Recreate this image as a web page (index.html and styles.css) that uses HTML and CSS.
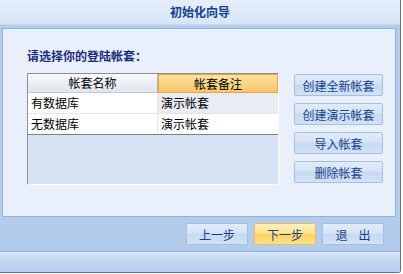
FILE: index.html
```html
<!DOCTYPE html>
<html lang="zh">
<head>
    <meta charset="UTF-8">
    <title>初始化向导</title>
    <link rel="stylesheet" href="styles.css">
</head>
<body>

<div class="window">
    <div class="titlebar">初始化向导</div>

    <div class="panel">
        <p class="label">请选择你的登陆帐套：</p>

        <div class="content">
            <div class="grid">
                <div class="row head">
                    <div class="cell first">帐套名称</div>
                    <div class="cell second sorted">帐套备注</div>
                </div>
                <div class="row">
                    <div class="cell first">有数据库</div>
                    <div class="cell second shaded">演示帐套</div>
                </div>
                <div class="row last">
                    <div class="cell first">无数据库</div>
                    <div class="cell second">演示帐套</div>
                </div>
            </div>

            <div class="side">
                <button class="btn wide">创建全新帐套</button>
                <button class="btn wide">创建演示帐套</button>
                <button class="btn wide">导入帐套</button>
                <button class="btn wide">删除帐套</button>
            </div>
        </div>
    </div>

    <div class="footer">
        <button class="btn">上一步</button>
        <button class="btn active">下一步</button>
        <button class="btn">退<span class="gap"></span>出</button>
    </div>

    <div class="strip"></div>
</div>

</body>
</html>
```

FILE: styles.css
```css
body {
    margin: 0;
    padding: 0;
    background-color: #ffffff;
    font-family: "Noto Sans CJK SC", "DejaVu Sans", sans-serif;
    font-size: 12px;
}
.window {
    width: 400px;
    height: 272px;
    border-right: 1px solid #5d7397;
    border-bottom: 1px solid #5d7397;
    border-bottom-right-radius: 3px;
    background-color: #b3cceb;
    display: flex;
    flex-direction: column;
}
.titlebar {
    height: 24px;
    line-height: 24px;
    text-align: center;
    font-weight: bold;
    color: #15428b;
    background: linear-gradient(#e6eefa, #d8e5f6);
    border-bottom: 1px solid #c7d9f0;
}
.panel {
    margin: 3px 4px 0 2px;
    border: 1px solid #8fb2e0;
    background-color: #e9f0fb;
    padding: 19px 0 0 24px;
    box-sizing: border-box;
    height: 189px;
}
.label {
    margin: 0;
    line-height: 16px;
    font-weight: bold;
    color: #1b2c7c;
}
.content {
    display: flex;
    margin-top: 9px;
}
.grid {
    width: 250px;
    height: 110px;
    border-top: 1px solid #8a8f98;
    border-left: 1px solid #8a8f98;
    border-right: 1px solid #ffffff;
    border-bottom: 1px solid #ffffff;
    background-color: #d5e2f3;
}
.row {
    display: flex;
    height: 20px;
    background-color: #ffffff;
    border-bottom: 1px solid #e4e6ea;
}
.row.last {
    border-bottom: 1px solid #7d7f84;
}
.row.head {
    height: 19px;
    border-bottom: none;
}
.cell {
    line-height: 20px;
    padding-left: 3px;
    color: #000000;
}
.first {
    width: 126px;
    border-right: 1px solid #e4e6ea;
}
.second {
    flex: 1;
}
.shaded {
    background-color: #e9ecf5;
}
.head .cell {
    line-height: 18px;
    text-align: center;
    padding-left: 0;
}
.head .first {
    width: 129px;
    background: linear-gradient(#f8f9fc, #dfe5ee);
    border-right: 1px solid #aeb6c4;
    border-bottom: 1px solid #c4cad4;
}
.head .sorted {
    background: linear-gradient(#fde3a3, #f8c66c);
    border: 1px solid #f2a23c;
    line-height: 17px;
}
.side {
    display: flex;
    flex-direction: column;
    gap: 7px;
    margin: 1px 0 0 15px;
}
.btn {
    font-family: "Noto Sans CJK SC", "DejaVu Sans", sans-serif;
    font-size: 12px;
    color: #15428b;
    width: 62px;
    height: 22px;
    padding: 0;
    border: 1px solid #a4bfe4;
    border-radius: 2px;
    background: linear-gradient(#e2ebf8 0%, #d6e4f6 45%, #c6d9f1 50%, #d2e2f6 100%);
    cursor: pointer;
}
.btn.wide {
    width: 89px;
}
.btn.active {
    border-color: #e4bd6c;
    background: linear-gradient(#fff1b8 0%, #fee598 45%, #fcd360 50%, #fde08a 100%);
}
.gap {
    display: inline-block;
    width: 11px;
}
.footer {
    display: flex;
    justify-content: flex-end;
    gap: 6px;
    height: 35px;
    padding: 6px 16px 0 0;
    box-sizing: border-box;
    border-bottom: 1px solid #93b2dc;
}
.strip {
    flex: 1;
    background: linear-gradient(#d9e6f7, #c4d8f2 40%, #b8cfee);
}
```
